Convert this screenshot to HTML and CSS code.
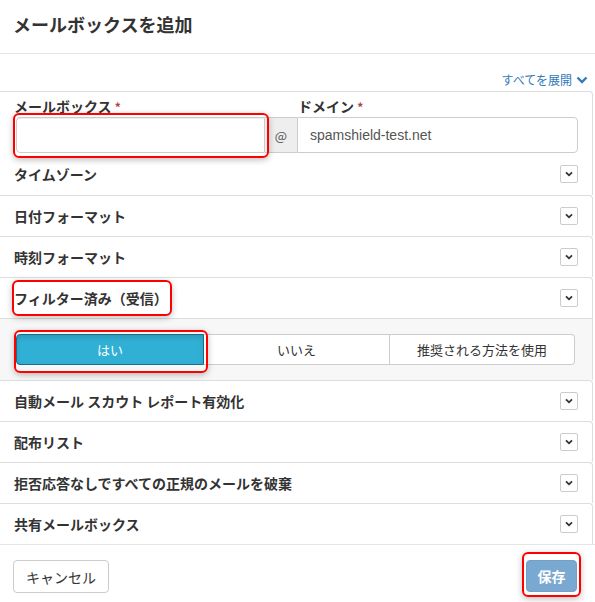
FILE: index.html
```html
<!DOCTYPE html>
<html lang="ja">
<head>
<meta charset="utf-8">
<link rel="stylesheet" href="styles.css">
</head>
<body>
<div class="modal">
  <div class="modal-header"><h4 class="title">メールボックスを追加</h4></div>
  <div class="expand-line"><a class="expand">すべてを展開 <svg width="12" height="8" viewBox="0 0 12 8"><path d="M1.5 1.5 L6 6 L10.5 1.5" fill="none" stroke="#337ab7" stroke-width="2.4"/></svg></a></div>

  <div class="section">
    <div class="fields">
      <label class="lbl">メールボックス <span class="req">*</span></label>
      <span></span>
      <label class="lbl lbl-domain">ドメイン <span class="req">*</span></label>
      <div class="hl-wrap"><input class="input input-mail" type="text"><span class="hl hl-mail"></span></div>
      <div class="addon">@</div>
      <input class="input input-domain" type="text" value="spamshield-test.net">
    </div>
    <div class="row"><span class="row-label">タイムゾーン</span><span class="chev"><svg width="8" height="6" viewBox="0 0 8 6"><path d="M1 1.3 L4 4.3 L7 1.3" fill="none" stroke="#333" stroke-width="1.8"/></svg></span></div>
  </div>

  <div class="section"><div class="row"><span class="row-label">日付フォーマット</span><span class="chev"><svg width="8" height="6" viewBox="0 0 8 6"><path d="M1 1.3 L4 4.3 L7 1.3" fill="none" stroke="#333" stroke-width="1.8"/></svg></span></div></div>
  <div class="section"><div class="row"><span class="row-label">時刻フォーマット</span><span class="chev"><svg width="8" height="6" viewBox="0 0 8 6"><path d="M1 1.3 L4 4.3 L7 1.3" fill="none" stroke="#333" stroke-width="1.8"/></svg></span></div></div>

  <div class="section">
    <div class="row"><span class="row-label hl-wrap hl-label">フィルター済み（受信）<span class="hl hl-filter"></span></span><span class="chev"><svg width="8" height="6" viewBox="0 0 8 6"><path d="M1 1.3 L4 4.3 L7 1.3" fill="none" stroke="#333" stroke-width="1.8"/></svg></span></div>
    <div class="sub">
      <div class="seg">
        <div class="seg-btn active hl-wrap">はい<span class="hl hl-yes"></span></div>
        <div class="seg-btn">いいえ</div>
        <div class="seg-btn">推奨される方法を使用</div>
      </div>
    </div>
  </div>

  <div class="section"><div class="row"><span class="row-label">自動メール スカウト レポート有効化</span><span class="chev"><svg width="8" height="6" viewBox="0 0 8 6"><path d="M1 1.3 L4 4.3 L7 1.3" fill="none" stroke="#333" stroke-width="1.8"/></svg></span></div></div>
  <div class="section"><div class="row"><span class="row-label">配布リスト</span><span class="chev"><svg width="8" height="6" viewBox="0 0 8 6"><path d="M1 1.3 L4 4.3 L7 1.3" fill="none" stroke="#333" stroke-width="1.8"/></svg></span></div></div>
  <div class="section"><div class="row"><span class="row-label">拒否応答なしですべての正規のメールを破棄</span><span class="chev"><svg width="8" height="6" viewBox="0 0 8 6"><path d="M1 1.3 L4 4.3 L7 1.3" fill="none" stroke="#333" stroke-width="1.8"/></svg></span></div></div>
  <div class="section"><div class="row"><span class="row-label">共有メールボックス</span><span class="chev"><svg width="8" height="6" viewBox="0 0 8 6"><path d="M1 1.3 L4 4.3 L7 1.3" fill="none" stroke="#333" stroke-width="1.8"/></svg></span></div></div>

  <div class="footer">
    <button class="btn btn-cancel">キャンセル</button>
    <span class="hl-wrap"><button class="btn btn-save">保存</button><span class="hl hl-save"></span></span>
  </div>
</div>
</body>
</html>
```

FILE: styles.css
```css
* { box-sizing: border-box; }
html, body { margin: 0; padding: 0; background: #fff; }
body {
  width: 595px;
  font-family: "Noto Sans CJK JP", "Liberation Sans", sans-serif;
  color: #333;
  font-size: 14px;
}
.modal { width: 595px; overflow: hidden; }
.modal-header {
  height: 54px;
  border-bottom: 1px solid #e5e5e5;
  padding: 10px 13px 0;
}
.title {
  margin: 0;
  font-size: 18px;
  font-weight: 700;
  line-height: 28px;
  color: #333;
}
.expand-line {
  height: 37px;
  display: flex;
  justify-content: flex-end;
  padding: 14px 7px 0 0;
}
.expand {
  color: #337ab7;
  font-size: 12px;
  line-height: 18px;
  display: flex;
  align-items: center;
  gap: 4px;
}
.section {
  border-top: 1px solid #ddd;
  border-right: 1px solid #ddd;
  border-top-right-radius: 4px;
  margin-right: 2px;
  margin-left: -4px;
  padding-left: 4px;
}
.fields {
  display: grid;
  grid-template-columns: 249px 32px 281px;
  grid-template-rows: 21px 36px;
  padding: 4px 0 0 16px;
}
.lbl {
  font-size: 14px;
  font-weight: 700;
  line-height: 21px;
  margin-left: -2px;
}
.lbl-domain { margin-left: 1px; }
.req { color: #a94442; font-size: 12px; }
.hl-wrap { position: relative; display: block; }
.hl {
  position: absolute;
  border: 2px solid #f00;
  border-radius: 6px;
  box-shadow: 0 2px 6px rgba(0,0,0,0.25);
  pointer-events: none;
}
.input {
  height: 36px;
  border: 1px solid #ccc;
  font-family: inherit;
  font-size: 14px;
  color: #555;
  padding: 0 12px;
  width: 100%;
  margin: 0;
}
.input-mail {
  border-radius: 4px 0 0 4px;
  box-shadow: inset 0 1px 1px rgba(0,0,0,0.075);
}
.hl-mail { left: -3px; top: -4px; right: -4px; bottom: -5px; }
.addon {
  height: 36px;
  background: #eee;
  border: 1px solid #ccc;
  border-left: 0;
  border-right: 0;
  display: flex;
  align-items: center;
  justify-content: center;
  font-size: 13px;
  color: #555;
}
.input-domain {
  border-radius: 0 4px 4px 0;
  font-family: "Liberation Sans", sans-serif;
  font-size: 14px;
}
.row {
  height: 40px;
  display: flex;
  align-items: center;
  justify-content: space-between;
  padding: 0 14px 0 14px;
}
.fields + .row { height: 42px; }
.row-label {
  font-size: 14px;
  font-weight: 700;
  line-height: 20px;
}
.hl-label { display: inline-block; }
.hl-filter { left: -2px; top: -8px; right: -4px; bottom: -8px; }
.chev {
  width: 18px;
  height: 18px;
  border: 1px solid #ccc;
  border-radius: 2px;
  display: flex;
  align-items: center;
  justify-content: center;
  background: #fff;
}
.sub {
  border-top: 1px solid #ddd;
  background: #f7f7f7;
  height: 62px;
  padding: 15px 17px 0 16px;
}
.seg {
  display: grid;
  grid-template-columns: 188px 186px 1fr;
  height: 31px;
}
.seg-btn {
  display: flex;
  align-items: center;
  justify-content: center;
  background: #fff;
  border: 1px solid #ccc;
  border-left: 0;
  font-size: 13px;
  color: #333;
}
.seg-btn:last-child { border-radius: 0 4px 4px 0; }
.seg-btn.active {
  background: #31b0d5;
  border: 1px solid #1b6d85;
  color: #fff;
  border-radius: 4px 0 0 4px;
  box-shadow: inset 0 3px 5px rgba(0,0,0,0.125);
}
.hl-yes { left: -3px; top: -5px; right: -5px; bottom: -9px; }
.footer {
  border-top: 1px solid #e5e5e5;
  height: 58px;
  display: flex;
  align-items: flex-start;
  justify-content: space-between;
  padding: 15px 18px 0 13px;
}
.btn {
  font-family: inherit;
  font-size: 14px;
  height: 33px;
  border-radius: 4px;
  margin: 0;
}
.btn-cancel {
  width: 96px;
  background: #fff;
  border: 1px solid #ccc;
  color: #333;
}
.btn-save {
  width: 51px;
  height: 32px;
  background: #337ab7;
  border: 1px solid #2e6da4;
  color: #fff;
  opacity: .65;
  font-weight: 700;
  display: block;
}
.hl-save { left: -4px; top: -8px; right: -4px; bottom: -5px; }
```
